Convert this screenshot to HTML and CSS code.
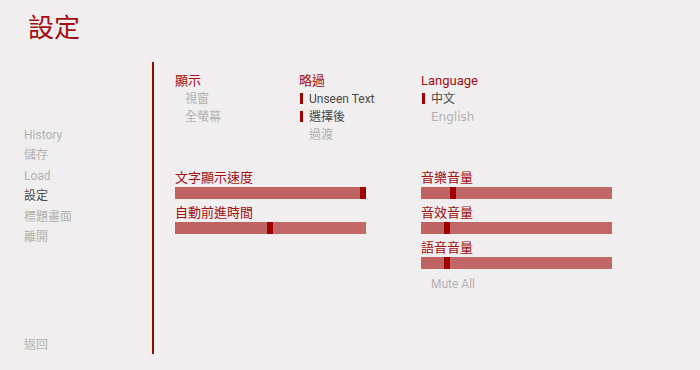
FILE: index.html
```html
<!DOCTYPE html>
<html lang="zh-Hant">

<head>
    <meta charset="UTF-8">
    <title>設定</title>
    <link rel="stylesheet" href="styles.css">
</head>

<body>

    <div class="screen">

        <h1 class="title">設定</h1>

        <div class="main">

            <div class="nav">
                <div class="nav-list">
                    <span class="nav-item">History</span>
                    <span class="nav-item">儲存</span>
                    <span class="nav-item">Load</span>
                    <span class="nav-item active">設定</span>
                    <span class="nav-item">標題畫面</span>
                    <span class="nav-item">離開</span>
                </div>
                <span class="nav-item back">返回</span>
            </div>

            <div class="content">

                <div class="options">
                    <div class="group group-display">
                        <div class="label">顯示</div>
                        <div class="option">視窗</div>
                        <div class="option">全螢幕</div>
                    </div>
                    <div class="group group-skip">
                        <div class="label">略過</div>
                        <div class="option selected">Unseen Text</div>
                        <div class="option selected">選擇後</div>
                        <div class="option">過渡</div>
                    </div>
                    <div class="group">
                        <div class="label">Language</div>
                        <div class="option selected">中文</div>
                        <div class="option english">English</div>
                    </div>
                </div>

                <div class="sliders">
                    <div class="slider-col">
                        <div class="slider">
                            <div class="label">文字顯示速度</div>
                            <div class="bar"><span class="fill" style="width: 186px"></span><span class="thumb"></span><span class="rest"></span></div>
                        </div>
                        <div class="slider">
                            <div class="label">自動前進時間</div>
                            <div class="bar"><span class="fill" style="width: 92px"></span><span class="thumb"></span><span class="rest"></span></div>
                        </div>
                    </div>
                    <div class="slider-col">
                        <div class="slider">
                            <div class="label">音樂音量</div>
                            <div class="bar"><span class="fill" style="width: 29px"></span><span class="thumb"></span><span class="rest"></span></div>
                        </div>
                        <div class="slider">
                            <div class="label">音效音量</div>
                            <div class="bar"><span class="fill" style="width: 23px"></span><span class="thumb"></span><span class="rest"></span></div>
                        </div>
                        <div class="slider">
                            <div class="label">語音音量</div>
                            <div class="bar"><span class="fill" style="width: 23px"></span><span class="thumb"></span><span class="rest"></span></div>
                        </div>
                        <div class="option mute">Mute All</div>
                    </div>
                </div>

            </div>

        </div>

    </div>

</body>

</html>
```

FILE: styles.css
```css
html,
body {
    margin: 0;
    padding: 0;
    height: 100%;
    overflow: hidden;
    font-family: Roboto, "Noto Sans CJK TC", sans-serif;
}

.screen {
    width: 700px;
    height: 370px;
    background: #f0eeee;
    color: #555;
}

.title {
    margin: 0;
    padding: 15px 0 21px 28px;
    height: 26px;
    font-size: 26px;
    line-height: 26px;
    font-weight: normal;
    color: #a50d10;
}

.main {
    display: flex;
}

.nav {
    display: flex;
    flex-direction: column;
    justify-content: space-between;
    width: 154px;
    height: 292px;
    padding-left: 24px;
    box-sizing: border-box;
    border-right: 2px solid #a00000;
}

.nav-list {
    display: flex;
    flex-direction: column;
    margin-top: 63px;
}

.nav-item {
    font-size: 12px;
    line-height: 20.4px;
    color: #b4b2b2;
}

.nav-item.active {
    color: #4a4a4a;
}

.back {
    line-height: 17px;
}

.content {
    padding-left: 21px;
    flex: 1;
}

.options {
    display: flex;
    padding-top: 10px;
}

.group {
    width: 122px;
}

.group-display {
    width: 124px;
}

.label {
    font-size: 13px;
    line-height: 18px;
    color: #a50d10;
}

.option {
    font-size: 12px;
    line-height: 18px;
    padding-left: 1px;
    color: #b4b2b2;
}

.option::before {
    content: "";
    display: inline-block;
    width: 3px;
    height: 11px;
    margin-right: 6px;
    vertical-align: -1px;
}

.option.selected {
    color: #4a4a4a;
}

.option.selected::before {
    background: #a00000;
}

.option.english {
    font-family: "DejaVu Sans", sans-serif;
    font-size: 12px;
}

.sliders {
    display: flex;
    margin-top: 23px;
}

.slider-col {
    width: 246px;
}

.slider {
    margin-bottom: 3px;
}

.slider .label {
    padding-top: 2px;
}

.bar {
    display: flex;
    width: 191px;
    height: 12px;
}

.fill {
    background: #be6262;
}

.thumb {
    width: 6px;
    background: #a00000;
}

.rest {
    flex: 1;
    background: #c26767;
}

.mute {
    margin-top: 6px;
}
```
